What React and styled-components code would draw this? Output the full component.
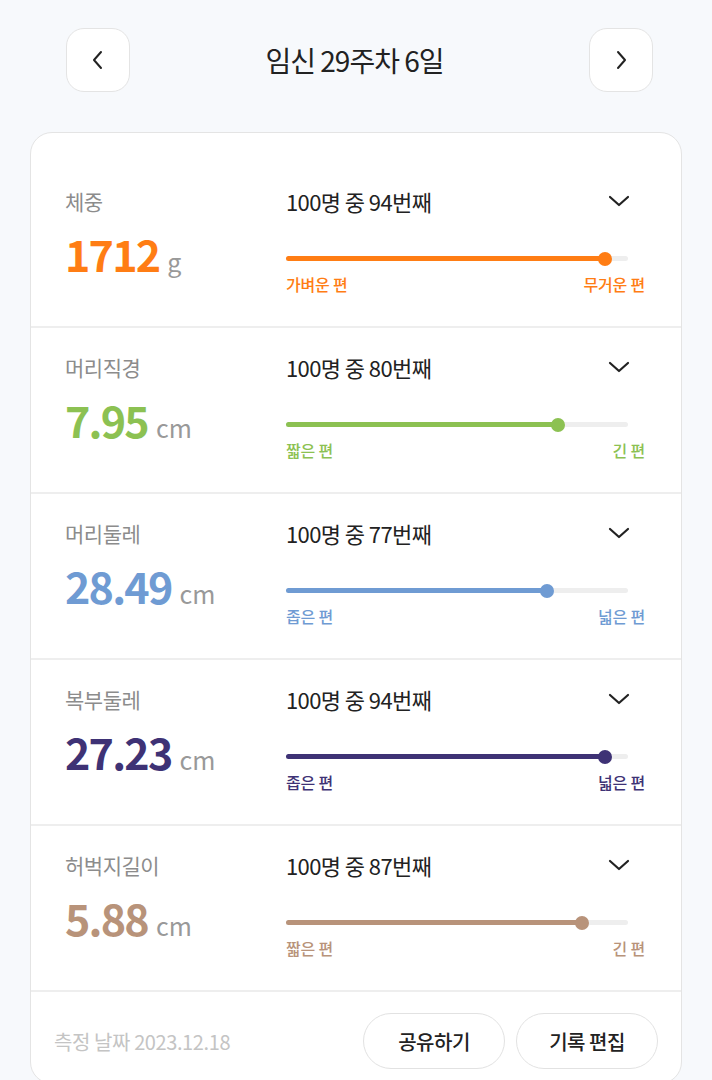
import React from "react";
import styled, { createGlobalStyle } from "styled-components";

const Global = createGlobalStyle`
  html, body { margin: 0; padding: 0; background: #f7f9fc; }
  body { font-family: "Noto Sans CJK KR", "Noto Sans", sans-serif; color: #222; }
  * { box-sizing: border-box; }
`;

const Page = styled.div`
  width: 712px;
  min-height: 1080px;
  background: #f7f9fc;
  padding: 28px 30px 0 30px;
`;

const Header = styled.div`
  display: flex;
  align-items: center;
  padding: 0 29px 0 36px;
`;

const NavButton = styled.button`
  width: 64px;
  height: 64px;
  border-radius: 18px;
  border: 1px solid #e4e4e4;
  background: #fff;
  display: flex;
  align-items: center;
  justify-content: center;
  padding: 0;
  cursor: pointer;
`;

const Title = styled.div`
  flex: 1;
  text-align: center;
  font-size: 28px;
  letter-spacing: -1px;
  color: #222;
  margin-right: 10px;
`;

const Card = styled.div`
  margin-top: 40px;
  background: #fff;
  border: 1px solid #e4e4e4;
  border-radius: 22px;
  padding-top: 29px;
  overflow: hidden;
`;

const Row = styled.div`
  display: flex;
  height: 166px;
  padding: 21px 36px 0 34px;
  border-bottom: 2px solid #eeeeee;
`;

const Left = styled.div`
  width: 221px;
  display: flex;
  flex-direction: column;
`;

const Label = styled.div`
  font-size: 21px;
  color: #8c8c8c;
  line-height: 36px;
  letter-spacing: -0.5px;
`;

const ValueLine = styled.div`
  display: flex;
  align-items: baseline;
  margin-top: 9px;
  gap: 8px;
`;

const Value = styled.span`
  font-size: 43px;
  font-weight: 700;
  color: ${(p) => p.$color};
  letter-spacing: -1.8px;
  line-height: 50px;
`;

const Unit = styled.span`
  font-size: 25px;
  color: #999;
`;

const Right = styled.div`
  flex: 1;
  display: flex;
  flex-direction: column;
`;

const RankLine = styled.div`
  display: flex;
  align-items: center;
  justify-content: space-between;
  height: 36px;
`;

const Rank = styled.div`
  font-size: 22px;
  color: #222;
  letter-spacing: -0.6px;
`;

const Chevron = styled.div`
  width: 24px;
  height: 24px;
  margin-right: 14px;
  display: flex;
  align-items: center;
  justify-content: center;
`;

const Track = styled.div`
  position: relative;
  width: 342px;
  height: 5px;
  border-radius: 3px;
  background: #eeeeee;
  margin-top: 37px;
`;

const Fill = styled.div`
  position: absolute;
  left: 0;
  top: 0;
  height: 5px;
  border-radius: 3px;
  background: ${(p) => p.$color};
`;

const Dot = styled.div`
  position: absolute;
  top: -4.5px;
  width: 14px;
  height: 14px;
  margin-left: -7px;
  border-radius: 50%;
  background: ${(p) => p.$color};
`;

const Ends = styled.div`
  display: flex;
  justify-content: space-between;
  margin-top: 11px;
  font-size: 16px;
  font-weight: 500;
  color: ${(p) => p.$color};
  letter-spacing: -0.2px;
`;

const Footer = styled.div`
  display: flex;
  align-items: center;
  justify-content: space-between;
  padding: 21px 23px 14px 23px;
`;

const DateText = styled.div`
  font-size: 20px;
  color: #c4c4c4;
  letter-spacing: -0.4px;
`;

const Buttons = styled.div`
  display: flex;
  gap: 11px;
`;

const PillButton = styled.button`
  width: 142px;
  height: 56px;
  border-radius: 28px;
  border: 1px solid #e2e2e2;
  background: #fff;
  font-family: inherit;
  font-size: 20px;
  font-weight: 500;
  color: #222;
  letter-spacing: -0.5px;
  cursor: pointer;
`;

const rows = [
  { label: "체중", value: "1712", unit: "g", rank: 94, pos: 0.933, color: "#ff7d14", lo: "가벼운 편", hi: "무거운 편" },
  { label: "머리직경", value: "7.95", unit: "cm", rank: 80, pos: 0.795, color: "#8cc152", lo: "짧은 편", hi: "긴 편" },
  { label: "머리둘레", value: "28.49", unit: "cm", rank: 77, pos: 0.763, color: "#6f9bd3", lo: "좁은 편", hi: "넓은 편" },
  { label: "복부둘레", value: "27.23", unit: "cm", rank: 94, pos: 0.933, color: "#3e3275", lo: "좁은 편", hi: "넓은 편" },
  { label: "허벅지길이", value: "5.88", unit: "cm", rank: 87, pos: 0.865, color: "#b8937a", lo: "짧은 편", hi: "긴 편" },
];

const ArrowLeft = () => (
  <svg width="14" height="22" viewBox="0 0 14 22">
    <path d="M10 3 L3 11 L10 19" fill="none" stroke="#222" strokeWidth="2" strokeLinecap="round" strokeLinejoin="round" />
  </svg>
);

const ArrowRight = () => (
  <svg width="14" height="22" viewBox="0 0 14 22">
    <path d="M4 3 L11 11 L4 19" fill="none" stroke="#222" strokeWidth="2" strokeLinecap="round" strokeLinejoin="round" />
  </svg>
);

const Down = () => (
  <svg width="22" height="14" viewBox="0 0 22 14">
    <path d="M2 3 L11 11 L20 3" fill="none" stroke="#222" strokeWidth="2.2" strokeLinecap="round" strokeLinejoin="round" />
  </svg>
);

export default function App() {
  return (
    <>
      <Global />
      <Page>
        <Header>
          <NavButton aria-label="이전"><ArrowLeft /></NavButton>
          <Title>임신 29주차 6일</Title>
          <NavButton aria-label="다음"><ArrowRight /></NavButton>
        </Header>
        <Card>
          {rows.map((r) => (
            <Row key={r.label}>
              <Left>
                <Label>{r.label}</Label>
                <ValueLine>
                  <Value $color={r.color}>{r.value}</Value>
                  <Unit>{r.unit}</Unit>
                </ValueLine>
              </Left>
              <Right>
                <RankLine>
                  <Rank>100명 중 {r.rank}번째</Rank>
                  <Chevron><Down /></Chevron>
                </RankLine>
                <Track>
                  <Fill $color={r.color} style={{ width: `${r.pos * 100}%` }} />
                  <Dot $color={r.color} style={{ left: `${r.pos * 100}%` }} />
                </Track>
                <Ends $color={r.color}>
                  <span>{r.lo}</span>
                  <span>{r.hi}</span>
                </Ends>
              </Right>
            </Row>
          ))}
          <Footer>
            <DateText>측정 날짜 2023.12.18</DateText>
            <Buttons>
              <PillButton>공유하기</PillButton>
              <PillButton>기록 편집</PillButton>
            </Buttons>
          </Footer>
        </Card>
      </Page>
    </>
  );
}
